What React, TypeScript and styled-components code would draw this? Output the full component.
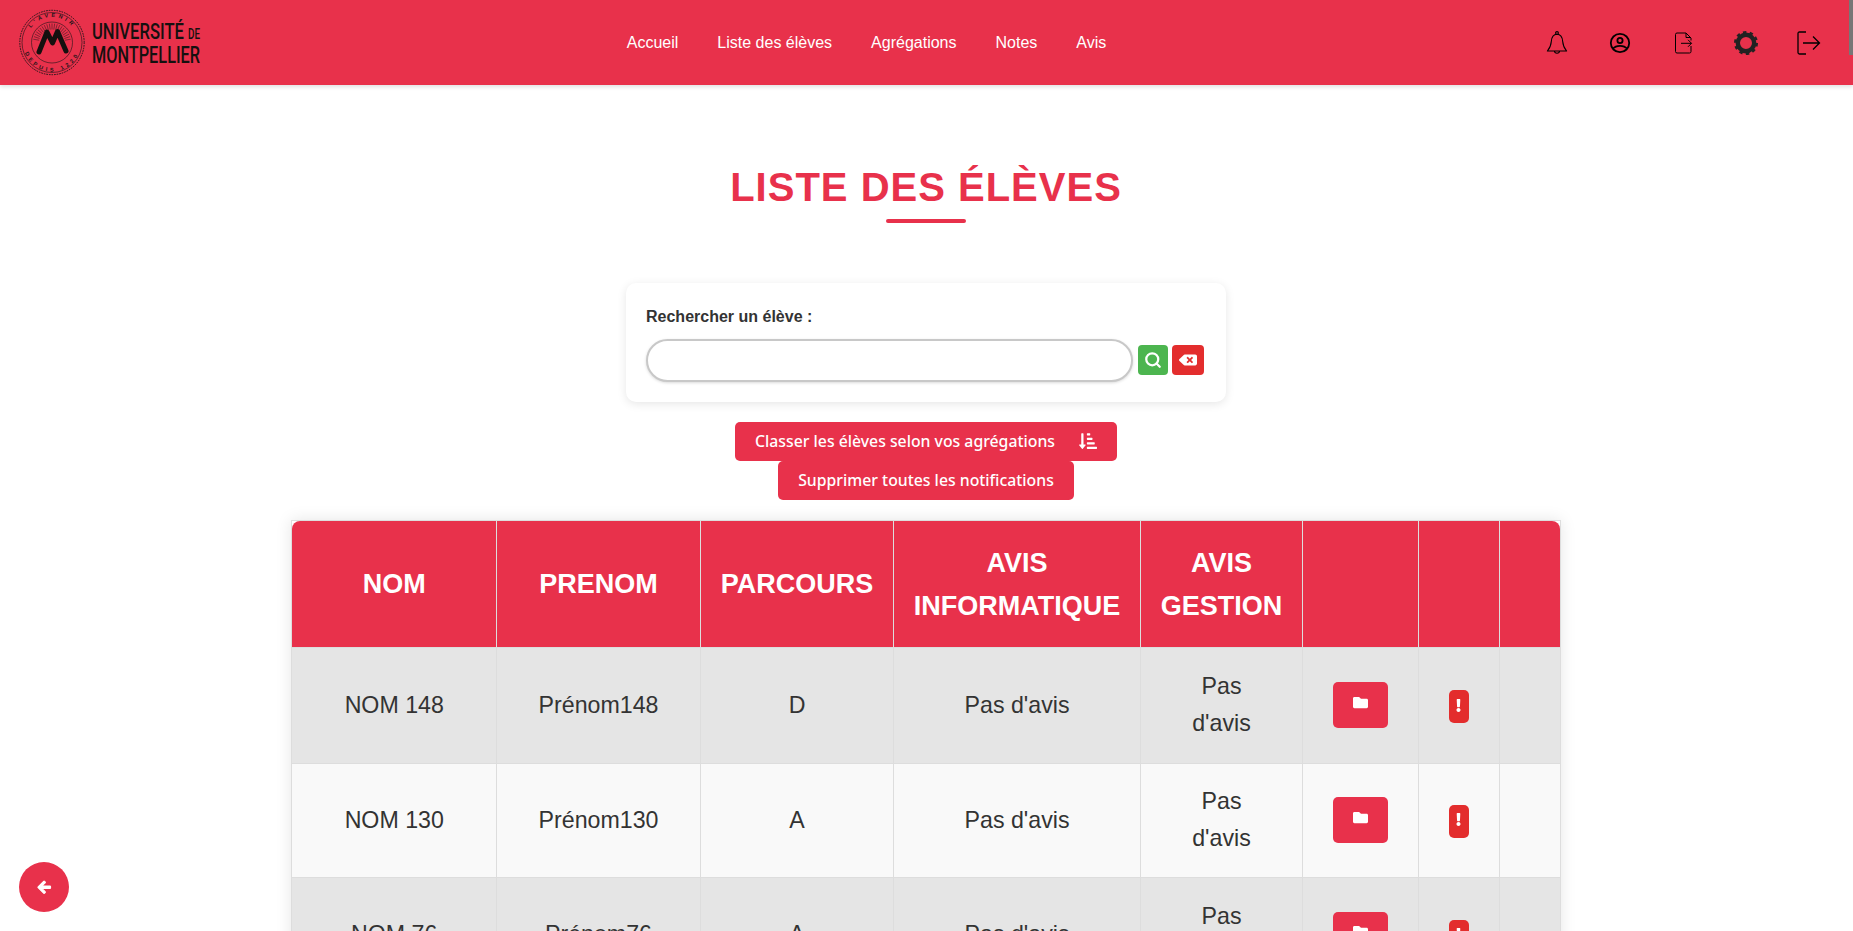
import React from 'react';
import styled, { createGlobalStyle } from 'styled-components';
import { FaArrowLeft, FaBackspace, FaExclamation, FaFolder, FaSortAmountDownAlt } from 'react-icons/fa';
import { Search } from 'lucide-react';

const RED = '#e8314b';
const DANGER = '#e32d2d';

const GlobalStyle = createGlobalStyle`
  html, body {
    margin: 0;
    height: 100%;
    overflow: hidden;
    background: #fff;
    font-family: "Liberation Sans", Arial, sans-serif;
    color: #333;
  }
`;

const Page = styled.div`
  height: 931px;
  overflow: hidden;
  position: relative;
`;

const Navbar = styled.header`
  height: 85px;
  background: ${RED};
  display: grid;
  grid-template-columns: 1fr auto 1fr;
  align-items: center;
  box-shadow: 0 2px 4px rgba(0, 0, 0, 0.12);
  position: relative;
`;

const LogoBox = styled.div`
  display: flex;
  padding-left: 18px;
`;

const NavLinks = styled.nav`
  display: flex;
  gap: 39px;
  margin-right: 120px;
`;

const NavLink = styled.a`
  color: #fff;
  font-size: 16px;
  line-height: 20px;
`;

const NavIcons = styled.div`
  display: flex;
  justify-content: flex-end;
  align-items: center;
  gap: 39px;
  padding-right: 32px;
`;

const IconSlot = styled.span`
  width: 24px;
  height: 24px;
  display: flex;
  align-items: center;
  justify-content: center;
`;

const ScrollThumb = styled.div`
  position: absolute;
  top: 0;
  right: 0;
  width: 4px;
  height: 55px;
  background: #777;
`;

const Main = styled.main`
  display: flex;
  flex-direction: column;
  align-items: center;
  padding-right: 1px;
`;

const Title = styled.h1`
  margin: 78px 0 0;
  font-size: 40px;
  line-height: 48px;
  font-weight: 700;
  letter-spacing: 1px;
  color: ${RED};
`;

const TitleBar = styled.div`
  width: 80px;
  height: 4px;
  border-radius: 2px;
  background: ${RED};
  margin-top: 8px;
`;

const SearchCard = styled.section`
  box-sizing: border-box;
  width: 600px;
  height: 119px;
  margin-top: 60px;
  padding: 25px 20px 0;
  background: #fff;
  border-radius: 10px;
  box-shadow: 0 2px 10px rgba(0, 0, 0, 0.1);
`;

const SearchLabel = styled.label`
  display: block;
  font-size: 16px;
  line-height: 18px;
  font-weight: 700;
`;

const SearchRow = styled.div`
  display: flex;
  align-items: center;
  gap: 4px;
  margin-top: 13px;
`;

const SearchInput = styled.input`
  box-sizing: border-box;
  width: 487px;
  height: 43px;
  margin-right: 1px;
  border: 2px solid #c8c8c8;
  border-radius: 22px;
  background: #fff;
  box-shadow: 0 1px 3px rgba(0, 0, 0, 0.15);
  outline: none;
`;

const SquareButton = styled.button<{ $bg: string; $wide?: boolean }>`
  width: ${p => (p.$wide ? 32 : 30)}px;
  height: 30px;
  margin-bottom: 1px;
  padding: 0;
  border: 0;
  border-radius: 4px;
  background: ${p => p.$bg};
  color: #fff;
  font-size: ${p => (p.$wide ? 18 : 16)}px;
  display: flex;
  align-items: center;
  justify-content: center;
`;

const ActionButton = styled.button<{ $first?: boolean }>`
  box-sizing: border-box;
  height: 39px;
  padding: 0 20px 2px;
  margin-top: ${p => (p.$first ? 20 : 0)}px;
  border: 0;
  border-radius: 5px;
  background: ${RED};
  color: #fff;
  font-family: "Noto Sans", sans-serif;
  font-size: 15.8px;
  font-weight: 500;
  display: flex;
  align-items: center;
  gap: 24px;
  svg {
    font-size: 18px;
  }
`;

const TableWrap = styled.div`
  box-sizing: border-box;
  width: 1270px;
  margin-top: 20px;
  border: 1px solid #ddd;
  box-shadow: 0 0 15px rgba(0, 0, 0, 0.1);
`;

const TableClip = styled.div`
  border-radius: 8px 8px 0 0;
  overflow: hidden;
`;

const Table = styled.table`
  width: 100%;
  table-layout: fixed;
  border-collapse: collapse;
`;

const HeadCell = styled.th`
  height: 125px;
  padding: 1px 15px 0 16px;
  background: ${RED};
  color: #fff;
  font-size: 27px;
  line-height: 43px;
  font-weight: 700;
  text-align: center;
  border-right: 1px solid #ddd;
  &:last-child {
    border-right: 0;
  }
`;

const Row = styled.tr<{ $even: boolean }>`
  background: ${p => (p.$even ? '#f9f9f9' : '#e5e5e5')};
  td {
    height: ${p => (p.$even ? 113 : 114.5)}px;
  }
`;

const Cell = styled.td`
  padding: 0 15px 0 16px;
  font-size: 23.2px;
  line-height: 37px;
  text-align: center;
  border: 1px solid #ddd;
  &:first-child {
    border-left: 0;
  }
  &:last-child {
    border-right: 0;
  }
`;

const FolderButton = styled.button`
  width: 55px;
  height: 46px;
  margin-left: -1px;
  padding: 0 0 3px;
  border: 0;
  border-radius: 5px;
  background: ${RED};
  color: #fff;
  font-size: 15px;
  vertical-align: middle;
`;

const AlertButton = styled.button`
  width: 20px;
  height: 33px;
  margin-left: -1px;
  padding: 0;
  border: 0;
  border-radius: 5px;
  background: ${DANGER};
  color: #fff;
  font-size: 13px;
  vertical-align: middle;
`;

const BackButton = styled.button`
  position: fixed;
  left: 19px;
  top: 862px;
  width: 50px;
  height: 50px;
  padding: 0 0 0 1px;
  border: 0;
  border-radius: 50%;
  background: ${RED};
  color: #fff;
  font-size: 14.5px;
  display: flex;
  align-items: center;
  justify-content: center;
  svg {
    stroke: currentColor;
    stroke-width: 36;
  }
`;

const INK = '#1c1418';
const rays = Array.from({ length: 21 }, (_, i) => -170 + i * 8);

const Logo = () => (
  <svg width="186" height="70" viewBox="0 0 186 70">
    <defs>
      <path id="sealTop" d="M 8.500 34.500 A 25.500 25.500 0 0 1 59.500 34.500" />
      <path id="sealBottom" d="M 5 34.500 A 29 29 0 0 0 63 34.500" />
    </defs>
    <g fill="none" stroke={INK}>
      <circle cx="34" cy="34.500" r="32.200" strokeWidth="1" strokeDasharray="1.600 1" />
      <circle cx="34" cy="34.500" r="30" strokeWidth="0.6" />
      <circle cx="34" cy="34.500" r="20.500" strokeWidth="0.6" />
      {rays.map(a => {
        const r = (a * Math.PI) / 180;
        return (
          <line
            key={a}
            x1={34 + 13 * Math.cos(r)}
            y1={34.5 + 13 * Math.sin(r)}
            x2={34 + 19 * Math.cos(r)}
            y2={34.5 + 19 * Math.sin(r)}
            strokeWidth="0.5"
          />
        );
      })}
    </g>
    <text fontFamily='"Liberation Sans", sans-serif' fontSize="5.500" fontWeight="700" fill={INK}>
      <textPath href="#sealTop" startOffset="50%" textAnchor="middle" letterSpacing="3">L'AVENIR</textPath>
    </text>
    <text fontFamily='"Liberation Sans", sans-serif' fontSize="5.500" fontWeight="700" fill={INK}>
      <textPath href="#sealBottom" startOffset="50%" textAnchor="middle" letterSpacing="3.200">DEPUIS 1220</textPath>
    </text>
    <path
      d="M21 44 L29 24 L34.500 35 L39.500 23.500 L48 43"
      fill="none"
      stroke="#15100f"
      strokeWidth="5"
      strokeLinecap="round"
      strokeLinejoin="round"
    />
    <g fontFamily='Roboto, "Liberation Sans", sans-serif' fontWeight="500" fill="#15100f">
      <text x="74" y="30.500" fontSize="22.500" textLength="92" lengthAdjust="spacingAndGlyphs">UNIVERSITÉ</text>
      <text x="170" y="30.500" fontSize="14" textLength="12" lengthAdjust="spacingAndGlyphs">DE</text>
      <text x="74" y="54.500" fontSize="23" textLength="108" lengthAdjust="spacingAndGlyphs">MONTPELLIER</text>
    </g>
  </svg>
);

const BellIcon = () => (
  <svg width="24" height="24" viewBox="0 0 24 24" fill="none" stroke="#000" strokeWidth="1.100" strokeLinejoin="round">
    <path d="M12 3.200 C7.800 3.200 6.600 6.500 6.300 10.500 C6 14.700 4.800 17.200 2.400 20 L21.600 20 C19.200 17.200 18 14.700 17.700 10.500 C17.400 6.500 16.200 3.200 12 3.200 Z" />
    <circle cx="12" cy="2" r="1.400" />
    <path d="M9.500 20 C9.600 23 14.400 23 14.500 20" />
  </svg>
);

const UserIcon = () => (
  <svg width="24" height="24" viewBox="0 0 24 24" fill="none" stroke="#000" strokeWidth="1.800">
    <circle cx="12" cy="12" r="9.200" />
    <circle cx="12" cy="9.500" r="2.600" />
    <path d="M4.800 17.800 C8 13.800 16 13.800 19.200 17.800" />
  </svg>
);

const FileIcon = () => (
  <svg width="24" height="24" viewBox="0 0 24 24" fill="none" stroke="#000" strokeWidth="1" strokeLinejoin="round">
    <path d="M20 9.500 V7 L15 2 H6 Q4.500 2 4.500 3.500 V20.500 Q4.500 22 6 22 H18.500 Q20 22 20 20.500 V15" />
    <path d="M15 2 V6.500 H20" />
    <path d="M10 12.300 H20.500 M17 8.800 L20.500 12.300 L17 15.800" />
  </svg>
);

const GearIcon = () => (
  <svg width="24" height="24" viewBox="0 0 24 24" fill="none" stroke="#222">
    <circle cx="12" cy="12" r="8.200" strokeWidth="4.400" />
    <circle cx="12" cy="12" r="10.700" strokeWidth="2.600" strokeDasharray="3.400 3.323" />
  </svg>
);

const LogoutIcon = () => (
  <svg width="24" height="24" viewBox="0 0 24 24" fill="none" stroke="#000" strokeWidth="1.300">
    <path d="M9 1 H2.500 Q1 1 1 2.500 V21.500 Q1 23 2.500 23 H9" />
    <path d="M6 12 H22.500 M16 5.500 L22.500 12 L16 18.500" />
  </svg>
);

const columns = [204, 204, 193, 247, 162, 116, 81, 61];
const headers = ['NOM', 'PRENOM', 'PARCOURS', 'AVIS INFORMATIQUE', 'AVIS GESTION', '', '', ''];
const students = [
  { nom: 'NOM 148', prenom: 'Prénom148', parcours: 'D' },
  { nom: 'NOM 130', prenom: 'Prénom130', parcours: 'A' },
  { nom: 'NOM 76', prenom: 'Prénom76', parcours: 'A' },
];

export default function App() {
  return (
    <Page>
      <GlobalStyle />
      <Navbar>
        <LogoBox>
          <Logo />
        </LogoBox>
        <NavLinks>
          <NavLink>Accueil</NavLink>
          <NavLink>Liste des élèves</NavLink>
          <NavLink>Agrégations</NavLink>
          <NavLink>Notes</NavLink>
          <NavLink>Avis</NavLink>
        </NavLinks>
        <NavIcons>
          <IconSlot><BellIcon /></IconSlot>
          <IconSlot><UserIcon /></IconSlot>
          <IconSlot><FileIcon /></IconSlot>
          <IconSlot><GearIcon /></IconSlot>
          <IconSlot><LogoutIcon /></IconSlot>
        </NavIcons>
        <ScrollThumb />
      </Navbar>
      <Main>
        <Title>LISTE DES ÉLÈVES</Title>
        <TitleBar />
        <SearchCard>
          <SearchLabel>Rechercher un élève :</SearchLabel>
          <SearchRow>
            <SearchInput />
            <SquareButton $bg="#4cb54f"><Search size={18} strokeWidth={3} /></SquareButton>
            <SquareButton $bg={DANGER} $wide><FaBackspace /></SquareButton>
          </SearchRow>
        </SearchCard>
        <ActionButton $first>
          Classer les élèves selon vos agrégations
          <FaSortAmountDownAlt />
        </ActionButton>
        <ActionButton>Supprimer toutes les notifications</ActionButton>
        <TableWrap>
          <TableClip>
            <Table>
              <colgroup>
                {columns.map((w, i) => <col key={i} width={w} />)}
              </colgroup>
              <thead>
                <tr>
                  {headers.map((h, i) => <HeadCell key={i}>{h}</HeadCell>)}
                </tr>
              </thead>
              <tbody>
                {students.map((s, i) => (
                  <Row key={s.nom} $even={i % 2 === 1}>
                    <Cell>{s.nom}</Cell>
                    <Cell>{s.prenom}</Cell>
                    <Cell>{s.parcours}</Cell>
                    <Cell>Pas d'avis</Cell>
                    <Cell>Pas<br />d'avis</Cell>
                    <Cell><FolderButton><FaFolder /></FolderButton></Cell>
                    <Cell><AlertButton><FaExclamation /></AlertButton></Cell>
                    <Cell />
                  </Row>
                ))}
              </tbody>
            </Table>
          </TableClip>
        </TableWrap>
      </Main>
      <BackButton><FaArrowLeft /></BackButton>
    </Page>
  );
}
